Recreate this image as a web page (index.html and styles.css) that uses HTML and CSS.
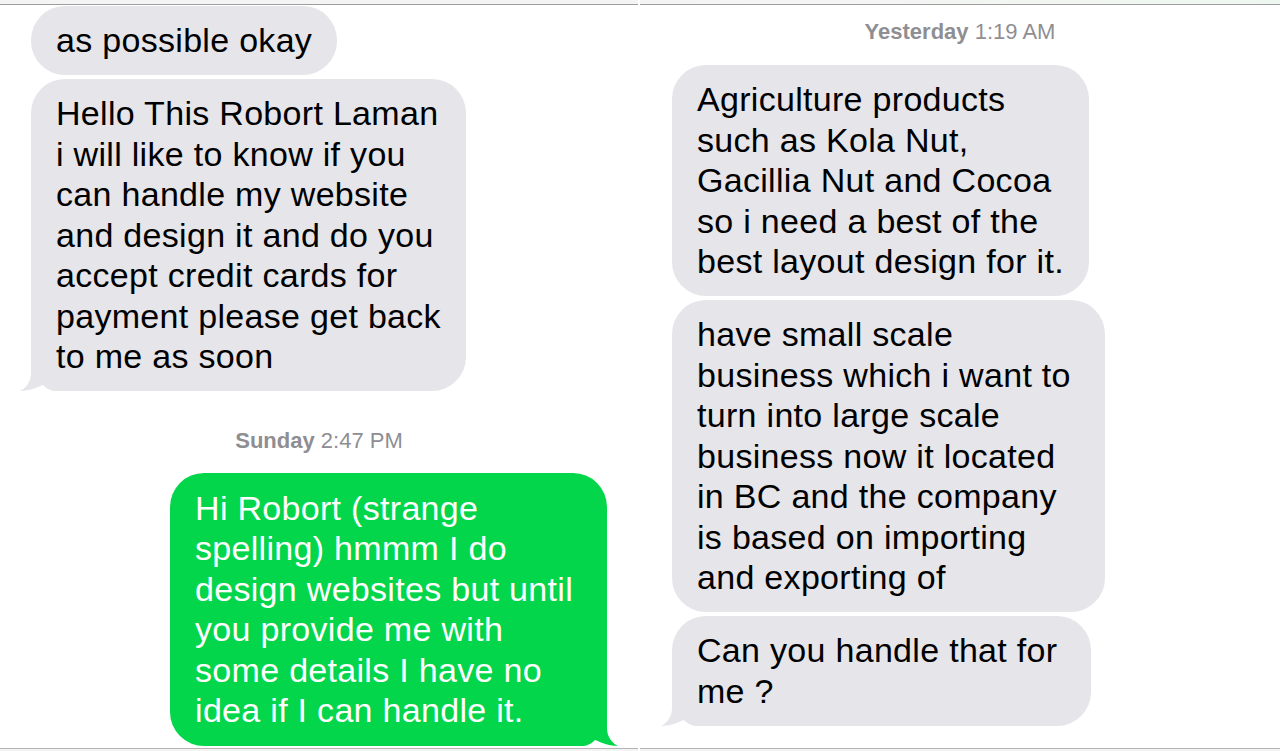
FILE: index.html
```html
<!DOCTYPE html>
<html lang="en">
<head>
<meta charset="utf-8">
<title>Messages</title>
<link rel="stylesheet" href="styles.css">
</head>
<body>
<div class="screen">
  <section class="panel panel-left">
    <div class="strip-top"></div>
    <div class="thread">
      <div class="bubble in">as possible okay</div>
      <div class="bubble in">Hello This Robort Laman<br>i will like to know if you<br>can handle my website<br>and design it and do you<br>accept credit cards for<br>payment please get back<br>to me as soon<svg class="tail" viewBox="0 0 45 34" aria-hidden="true"><path d="M11 0 L11 16 C11 25 6 31 0 34 C8 34 16 31 23 28 C27 32 31 34 37 34 L45 34 L45 0 Z"/></svg></div>
      <div class="stamp"><b>Sunday</b> 2:47 PM</div>
      <div class="bubble out roomy">Hi Robort (strange<br>spelling) hmmm I do<br>design websites but until<br>you provide me with<br>some details I have no<br>idea if I can handle it.<svg class="tail" viewBox="0 0 45 34" aria-hidden="true"><path d="M11 0 L11 16 C11 25 6 31 0 34 C8 34 16 31 23 28 C27 32 31 34 37 34 L45 34 L45 0 Z"/></svg></div>
    </div>
    <div class="strip-bottom"></div>
  </section>
  <section class="panel panel-right">
    <div class="strip-top tinted"></div>
    <div class="thread">
      <div class="stamp stamp-first"><b>Yesterday</b> 1:19 AM</div>
      <div class="bubble in">Agriculture products<br>such as Kola Nut,<br>Gacillia Nut and Cocoa<br>so i need a best of the<br>best layout design for it.</div>
      <div class="bubble in roomy">have small scale<br>business which i want to<br>turn into large scale<br>business now it located<br>in BC and the company<br>is based on importing<br>and exporting of</div>
      <div class="bubble in roomy">Can you handle that for<br>me ?<svg class="tail" viewBox="0 0 45 34" aria-hidden="true"><path d="M11 0 L11 16 C11 25 6 31 0 34 C8 34 16 31 23 28 C27 32 31 34 37 34 L45 34 L45 0 Z"/></svg></div>
    </div>
    <div class="strip-bottom"></div>
  </section>
</div>
</body>
</html>
```
FILE: styles.css
```css
* {
  box-sizing: border-box;
}

html, body {
  margin: 0;
  padding: 0;
  background: #ffffff;
}

body {
  font-family: "Liberation Sans", Arial, Helvetica, sans-serif;
  color: #000;
}

.screen {
  display: flex;
  gap: 2px;
  width: 1280px;
  height: 751px;
  overflow: hidden;
}

.panel {
  display: flex;
  flex-direction: column;
  height: 751px;
}

.panel-left {
  flex: 0 0 638px;
}

.panel-right {
  flex: 1 1 auto;
}

.strip-top {
  height: 5px;
  background: #f4f4f4;
  border-bottom: 1px solid #9e9e9e;
}

.strip-top.tinted {
  background: linear-gradient(90deg, #f4f4f4 0%, #f3f5f3 50%, #eef7ef 100%);
}

.strip-bottom {
  height: 3px;
  background: #f4f4f4;
  border-top: 1px solid #b4b4b4;
}

.thread {
  flex: 1 1 auto;
  display: flex;
  flex-direction: column;
  align-items: flex-start;
  gap: 4px;
  padding: 1px 31px 0 31px;
}

.panel-right .thread {
  padding: 0 32px;
}

.bubble {
  position: relative;
  isolation: isolate;
  padding: 14px 25px 14.5px;
  font-size: 34px;
  line-height: 40.5px;
  letter-spacing: 0.3px;
  white-space: nowrap;
  border-radius: 34px;
}

.bubble.roomy {
  padding-right: 34px;
}

.bubble.in {
  background: #e5e5ea;
  color: #000;
}

.bubble.out {
  align-self: flex-end;
  padding-top: 15px;
  padding-bottom: 15px;
  background: #03d64b;
  color: #ffffff;
}

.tail {
  position: absolute;
  z-index: -1;
  bottom: 0;
  left: -11px;
  width: 45px;
  height: 34px;
  display: block;
}

.bubble.in .tail path {
  fill: #e5e5ea;
}

.bubble.out .tail {
  left: auto;
  right: -11px;
  transform: scaleX(-1);
}

.bubble.out .tail path {
  fill: #03d64b;
}

.stamp {
  align-self: stretch;
  text-align: center;
  font-size: 22px;
  line-height: 26px;
  color: #8e8e93;
  margin: 32.5px 0 15px;
}

.stamp b {
  font-weight: bold;
}

.stamp-first {
  margin: 14px 0 16px;
}
```
